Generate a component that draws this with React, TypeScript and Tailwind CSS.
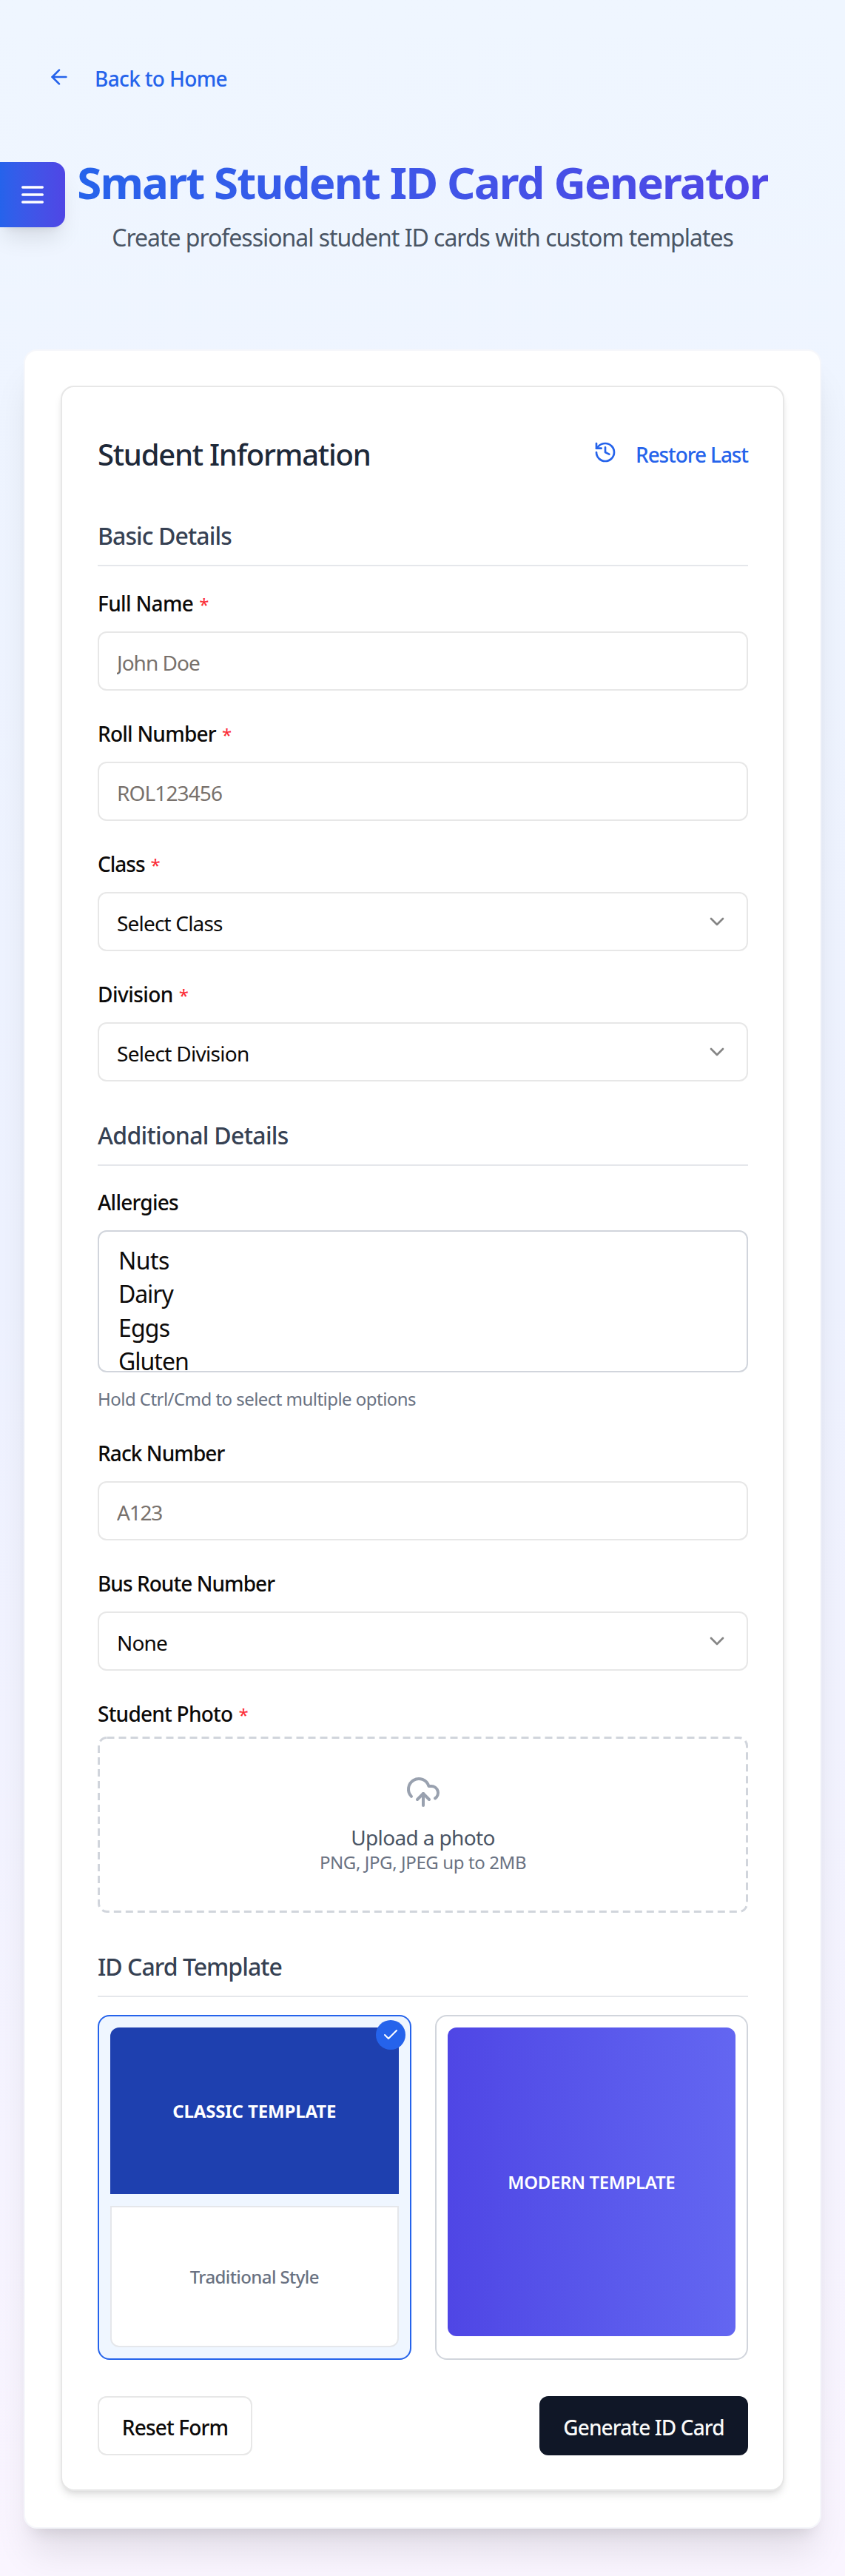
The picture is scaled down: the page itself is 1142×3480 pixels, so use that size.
import type { ReactNode } from "react";
import { ArrowLeft, Check, ChevronDown, CloudUpload, History } from "lucide-react";

const labelClass = "h-[28px] text-[28px] leading-[28px] font-medium text-[#0c0a09] whitespace-nowrap";
const boxClass =
  "mt-6 flex h-20 w-full items-center justify-between rounded-[12px] border-2 border-[#e7e7e7] bg-white pl-6 pr-6 text-[28px]";

function Label({ children, required, tracking }: { children: ReactNode; required?: boolean; tracking: string }) {
  return (
    <div className={`${labelClass} ${tracking}`}>
      {children}
      {required && <span className="ml-[8px] text-[24px] leading-none font-normal text-red-500">*</span>}
    </div>
  );
}

function TextInput({ placeholder, tracking }: { placeholder: string; tracking: string }) {
  return (
    <input
      className={`${boxClass} ${tracking} pt-1 text-[#0c0a09] outline-none placeholder:text-[#78716c]`}
      placeholder={placeholder}
    />
  );
}

function SelectBox({ value, tracking }: { value: string; tracking: string }) {
  return (
    <button type="button" className={`${boxClass} text-[#0c0a09]`}>
      <span className={`pt-1 leading-[40px] ${tracking}`}>{value}</span>
      <ChevronDown className="size-8 text-[#858585]" />
    </button>
  );
}

function SectionTitle({ children, className }: { children: ReactNode; className: string }) {
  return (
    <h3 className={`border-b-2 border-gray-200 text-[32px] leading-[48px] font-medium text-gray-700 ${className}`}>
      {children}
    </h3>
  );
}

const allergies = [
  { name: "Nuts", tracking: "tracking-[-0.55px]" },
  { name: "Dairy", tracking: "tracking-[-1.1px]" },
  { name: "Eggs", tracking: "tracking-[-0.8px]" },
  { name: "Gluten", tracking: "tracking-[-1px]" },
];

export default function App() {
  return (
    <div className="relative h-[3480px] w-[1142px] overflow-hidden bg-linear-to-b from-[#eff6ff] via-[#eef2ff] to-[#faf5ff] font-['Noto_Sans',sans-serif]">
      <button
        type="button"
        aria-label="Open menu"
        className="absolute top-[219px] left-0 z-10 flex size-[88px] items-center justify-center rounded-r-[16px] bg-linear-to-r from-[#2563eb] to-[#4f46e5] shadow-[0_20px_30px_-6px_rgba(0,0,0,0.1),0_8px_12px_-8px_rgba(0,0,0,0.1)]"
      >
        <svg viewBox="0 0 24 24" className="size-10" fill="none" stroke="white" strokeWidth="2" strokeLinecap="round">
          <path d="M4 6h16M4 12h16M4 18h16" />
        </svg>
      </button>

      <div className="pt-[88px]">
        <a className="ml-16 flex h-[36px] w-fit items-start gap-8 text-[28px] leading-[36px] font-medium tracking-[-0.65px] text-[#2563eb]">
          <ArrowLeft className="size-8" />
          Back to Home
        </a>
      </div>

      <header className="mt-[86px] text-center whitespace-nowrap">
        <h1 className="mx-auto w-fit bg-linear-to-r from-[#2563eb] to-[#4f46e5] bg-clip-text text-[60px] leading-[72px] font-bold tracking-[-1.85px] text-transparent">
          Smart Student ID Card Generator
        </h1>
        <p className="mt-[15px] text-[32px] leading-[48px] tracking-[-1.02px] text-gray-600">
          Create professional student ID cards with custom templates
        </p>
      </header>

      <main className="mx-8 mt-[127px] rounded-[18px] border-2 border-[#f6f7fb] bg-white px-12 pt-[47px] pb-[49px] shadow-[0_40px_50px_-10px_rgba(0,0,0,0.1),0_16px_20px_-12px_rgba(0,0,0,0.1)]">
        <div className="rounded-[18px] border-2 border-[#e7e7e7] bg-white pt-[63px] pr-[47px] pb-[46px] pl-12 shadow-[0_8px_12px_-2px_rgba(0,0,0,0.1),0_4px_8px_-4px_rgba(0,0,0,0.1)]">
          <div className="flex h-[56px] items-center justify-between">
            <h2 className="text-[40px] leading-[56px] font-medium tracking-[-1.25px] text-gray-800">
              Student Information
            </h2>
            <a className="flex items-center text-[28px] leading-[40px] font-medium tracking-[-1.1px] text-[#2563eb]">
              <History className="mr-[25px] mb-1.5 size-8" />
              Restore Last
            </a>
          </div>

          <SectionTitle className="mt-[58px] pb-[15px] tracking-[-0.9px]">Basic Details</SectionTitle>

          <div className="mt-9 flex flex-col gap-11">
            <div>
              <Label required tracking="tracking-[-0.65px]">Full Name</Label>
              <TextInput placeholder="John Doe" tracking="tracking-[-0.98px]" />
            </div>
            <div>
              <Label required tracking="tracking-[-0.76px]">Roll Number</Label>
              <TextInput placeholder="ROL123456" tracking="tracking-[-0.88px]" />
            </div>
            <div>
              <Label required tracking="tracking-[-1px]">Class</Label>
              <SelectBox value="Select Class" tracking="tracking-[-0.82px]" />
            </div>
            <div>
              <Label required tracking="tracking-[-0.55px]">Division</Label>
              <SelectBox value="Select Division" tracking="tracking-[-0.69px]" />
            </div>
          </div>

          <SectionTitle className="mt-[49px] pb-[15px] tracking-[-0.7px]">Additional Details</SectionTitle>

          <div className="mt-[35px]">
            <Label tracking="tracking-[-0.76px]">Allergies</Label>
            <ul className="mt-6 h-48 overflow-hidden rounded-[12px] border-2 border-gray-300 pt-4 pl-[26px] text-[32px] leading-[45.33px] text-[#0c0a09]">
              {allergies.map((a) => (
                <li key={a.name} className={a.tracking}>
                  {a.name}
                </li>
              ))}
            </ul>
            <p className="mt-5 text-[24px] leading-[32px] tracking-[-0.54px] text-gray-500">
              Hold Ctrl/Cmd to select multiple options
            </p>
          </div>

          <div className="mt-[43px]">
            <Label tracking="tracking-[-0.91px]">Rack Number</Label>
            <TextInput placeholder="A123" tracking="tracking-[-1.2px]" />
          </div>
          <div className="mt-11">
            <Label tracking="tracking-[-0.95px]">Bus Route Number</Label>
            <SelectBox value="None" tracking="tracking-[-0.84px]" />
          </div>
          <div className="mt-11">
            <Label required tracking="tracking-[-0.76px]">Student Photo</Label>
            <div className="relative mt-[17px] flex h-[238px] flex-col items-center pt-[51px]">
              <svg className="absolute inset-0 size-full text-gray-300" viewBox="0 0 879 238" fill="none">
                <rect
                  x="1.5"
                  y="1.5"
                  width="876"
                  height="235"
                  rx="11"
                  stroke="currentColor"
                  strokeWidth="3"
                  strokeDasharray="10 6"
                />
              </svg>
              <CloudUpload className="size-12 shrink-0 text-gray-400" />
              <p className="mt-[19px] text-[28px] leading-[36px] tracking-[-0.63px] text-gray-600">Upload a photo</p>
              <p className="text-[24px] leading-[32px] tracking-[-0.39px] text-gray-500">PNG, JPG, JPEG up to 2MB</p>
            </div>
          </div>

          <SectionTitle className="mt-[49px] pb-[15px] tracking-[-0.98px]">ID Card Template</SectionTitle>

          <div className="mt-6 grid h-[466px] grid-cols-2 gap-8">
            <div className="relative flex flex-col gap-4 rounded-[16px] border-2 border-[#2563eb] bg-[#eff6ff] p-[15px]">
              <div className="flex h-[225px] items-center justify-center rounded-t-[12px] bg-[#1e40af] text-[24px] leading-[32px] font-bold tracking-[-0.13px] text-white">
                CLASSIC TEMPLATE
              </div>
              <div className="flex h-[191px] items-center justify-center rounded-b-[12px] border-2 border-gray-200 bg-white text-[24px] leading-[32px] font-medium tracking-[-0.59px] text-gray-500">
                Traditional Style
              </div>
              <div className="absolute top-[5px] right-[6px] flex size-10 items-center justify-center rounded-full bg-[#2563eb]">
                <Check className="size-6 text-white" />
              </div>
            </div>
            <div className="rounded-[16px] border-2 border-gray-300 bg-white p-[15px]">
              <div className="flex h-[417px] items-center justify-center rounded-[12px] bg-linear-to-r from-[#4f46e5] to-[#6366f1] text-[24px] leading-[32px] font-semibold tracking-[-0.37px] text-white">
                MODERN TEMPLATE
              </div>
            </div>
          </div>

          <div className="mt-[49px] flex justify-between">
            <button
              type="button"
              className="flex h-20 w-[209px] items-center justify-center rounded-[12px] border-2 border-[#e7e7e7] bg-white pt-1 text-[28px] leading-[40px] font-medium tracking-[-0.84px] text-[#0c0a09]"
            >
              Reset Form
            </button>
            <button
              type="button"
              className="flex h-20 w-[282px] items-center justify-center rounded-[12px] bg-[#101727] pt-1 text-[28px] leading-[40px] font-medium tracking-[-0.88px] text-[#fafaf9]"
            >
              Generate ID Card
            </button>
          </div>
        </div>
      </main>
    </div>
  );
}
